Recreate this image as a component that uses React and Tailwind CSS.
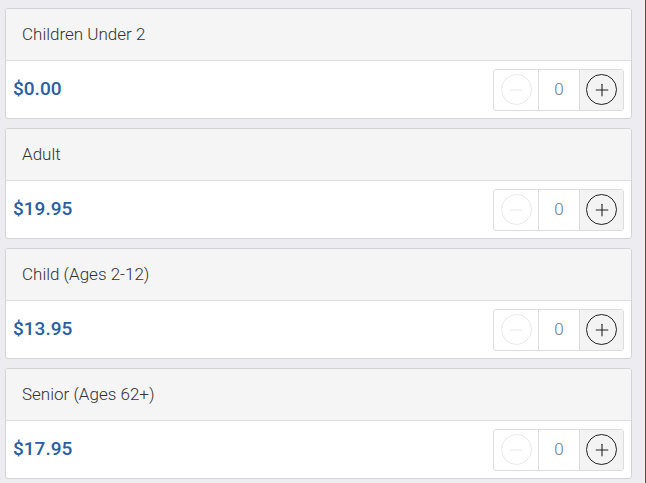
import { Minus, Plus } from 'lucide-react'

const tickets = [
  { label: 'Children Under 2', price: '$0.00' },
  { label: 'Adult', price: '$19.95' },
  { label: 'Child (Ages 2-12)', price: '$13.95' },
  { label: 'Senior (Ages 62+)', price: '$17.95' },
]

function Stepper() {
  return (
    <div className="flex h-[42px] border border-[#dcdcdc] rounded-[3px] overflow-hidden">
      <button className="w-[44px] flex items-center justify-center bg-white">
        <span className="w-[31px] h-[31px] rounded-full border border-[#e8e8e8] flex items-center justify-center">
          <Minus size={18} strokeWidth={1.2} className="text-[#e3e3e3]" />
        </span>
      </button>
      <div className="w-[42px] flex items-center justify-center border-x border-[#dcdcdc] bg-white text-[17px] font-light text-[#777]">
        0
      </div>
      <button className="w-[43px] flex items-center justify-center bg-[#f3f3f3]">
        <span className="w-[31px] h-[31px] rounded-full border border-[#222] flex items-center justify-center">
          <Plus size={20} strokeWidth={1.3} className="text-[#222]" />
        </span>
      </button>
    </div>
  )
}

export default function App() {
  return (
    <div
      className="w-[646px] h-[483px] bg-[#ededf1] flex overflow-hidden"
      style={{ fontFamily: 'Roboto, "Liberation Sans", sans-serif' }}
    >
      <div className="flex-1 flex flex-col gap-[9px] pt-[8px] pl-[5px] pr-[13px]">
        {tickets.map((t) => (
          <div key={t.label} className="bg-white border border-[#d3d3d6] rounded-[3px] overflow-hidden">
            <div className="h-[52px] bg-[#f5f5f5] border-b border-[#dedede] flex items-center px-[16px] text-[17px] font-light text-[#333]">
              {t.label}
            </div>
            <div className="h-[57px] flex items-center justify-between pl-[7px] pr-[7px]">
              <span className="text-[19px] font-medium text-[#2a5ea3]">{t.price}</span>
              <Stepper />
            </div>
          </div>
        ))}
      </div>
      <div className="w-[1px] bg-[#5a5040]" />
    </div>
  )
}
